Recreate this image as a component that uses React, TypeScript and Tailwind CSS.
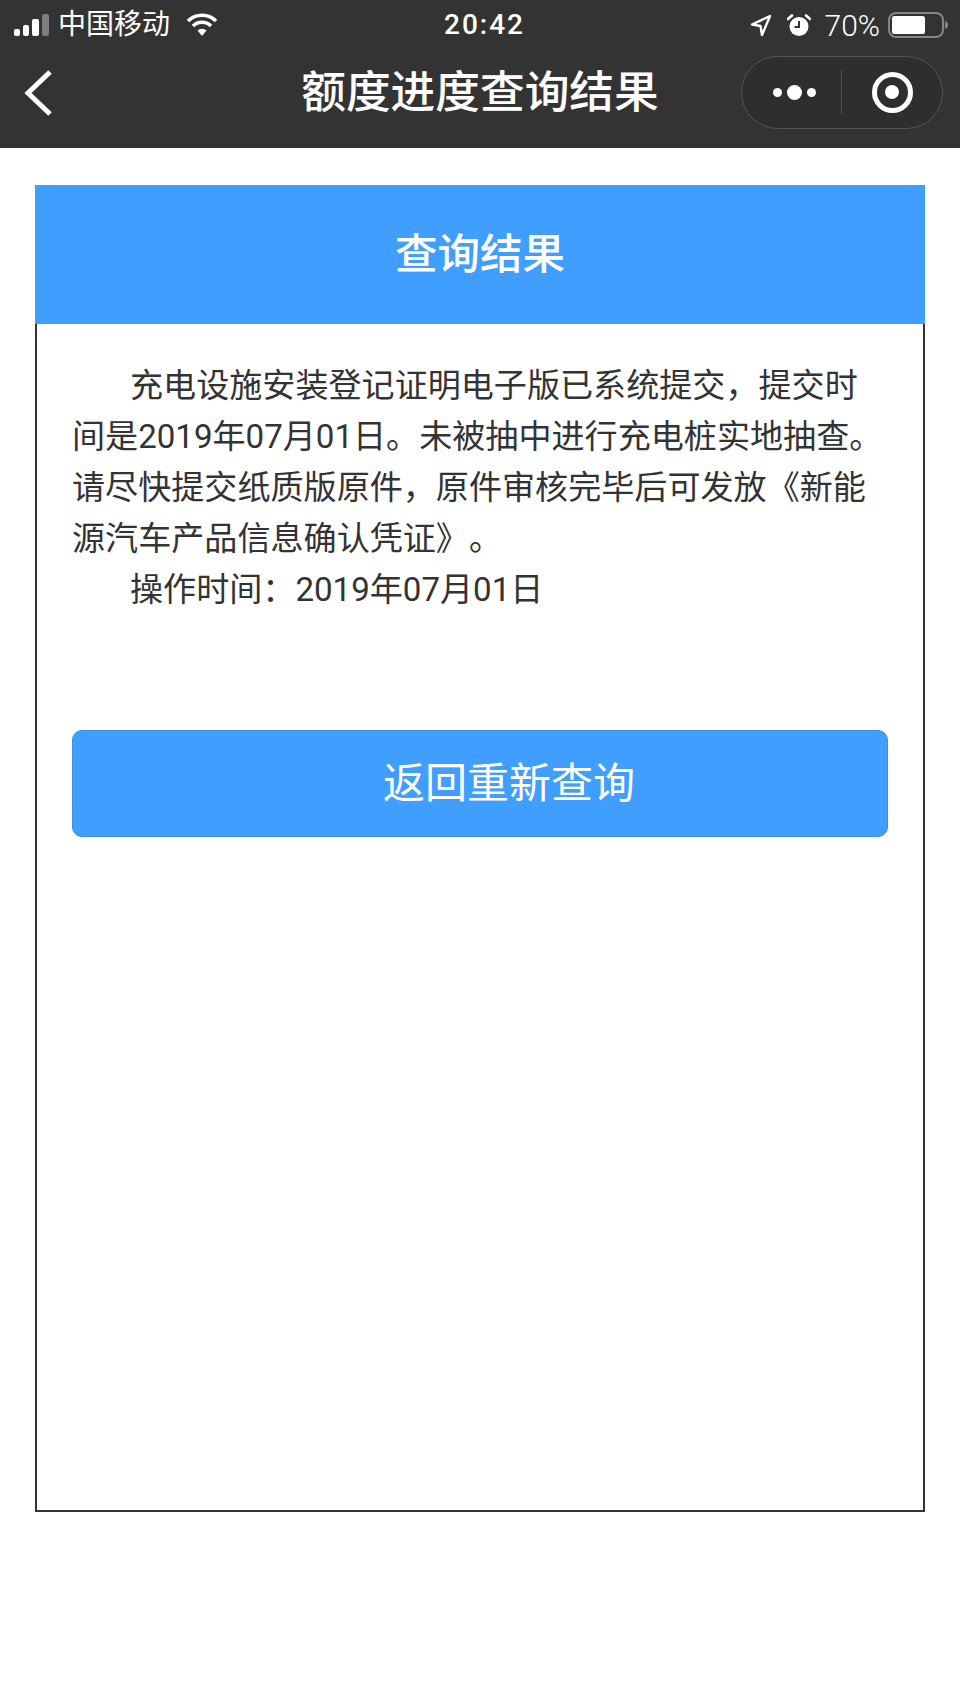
import React from 'react';

function StatusBar() {
  return (
    <div className="h-[50px] grid grid-cols-[1fr_auto_1fr] items-center pl-[14px] pr-[11px] text-white">
      <div className="flex items-center">
        <div className="flex items-end gap-[3px] h-[22px]">
          <span className="w-[6px] h-[7px] bg-white rounded-[2px]" />
          <span className="w-[6px] h-[11px] bg-white rounded-[2px]" />
          <span className="w-[7px] h-[17px] bg-white rounded-[2px]" />
          <span className="w-[7px] h-[22px] bg-[#7d7d7d] rounded-[2px]" />
        </div>
        <span className="ml-[9px] text-[28px]">中国移动</span>
        <svg className="ml-[16px]" width="32" height="24" viewBox="0 0 32 24" fill="none" stroke="white" strokeWidth="3.6">
          <path d="M2 8A20 20 0 0 1 30 8" />
          <path d="M7 13A12.7 12.7 0 0 1 25 13" />
          <path d="M11.5 17.5A6.4 6.4 0 0 1 20.5 17.5L16 23Z" fill="white" stroke="none" />
        </svg>
      </div>
      <span className="ml-[6px] text-[28px] font-medium tracking-[2px]">20:42</span>
      <div className="flex items-center justify-end">
        <svg width="22" height="23" viewBox="0 0 22 23" fill="none" stroke="white" strokeWidth="2.4" strokeLinejoin="round">
          <path d="M2 10.5L20 2L12 21L10.5 12Z" />
        </svg>
        <svg className="ml-[15px]" width="24" height="23" viewBox="0 0 24 23">
          <circle cx="12" cy="12.5" r="9.5" fill="white" />
          <path d="M1 5L5 1.5M23 5L19 1.5" stroke="white" strokeWidth="2.6" strokeLinecap="round" />
          <path d="M12 7V13H7.5" fill="none" stroke="#333333" strokeWidth="2" />
        </svg>
        <span className="ml-[14px] text-[30px] font-light">70%</span>
        <svg className="ml-[8px]" width="61" height="26" viewBox="0 0 61 26">
          <rect x="1" y="1" width="54" height="24" rx="7" fill="none" stroke="#858585" strokeWidth="2" />
          <rect x="4" y="4" width="33" height="18" rx="2.5" fill="white" />
          <path d="M57 9C59 9.500 60 11 60 13C60 15 59 16.500 57 17Z" fill="#858585" />
        </svg>
      </div>
    </div>
  );
}

function NavBar() {
  return (
    <div className="h-[86px] grid grid-cols-[1fr_auto_1fr] items-center text-white">
      <svg className="ml-[23px]" width="30" height="48" viewBox="0 0 30 48" fill="none" stroke="white" strokeWidth="5">
        <path d="M27 3L5 24L27 45" />
      </svg>
      <span className="text-[44.700px] font-medium leading-none">额度进度查询结果</span>
      {/* Capsule */}
      <div className="justify-self-end mr-[17px] -mt-[2px] w-[202px] h-[73px] flex items-center rounded-full border border-[#555555] bg-[#2e2e2e]">
        <div className="w-[99px] shrink-0 pl-[5px] flex items-center justify-center gap-[5px]">
          <span className="w-[9px] h-[9px] rounded-full bg-white" />
          <span className="w-[15px] h-[15px] rounded-full bg-white" />
          <span className="w-[9px] h-[9px] rounded-full bg-white" />
        </div>
        <div className="w-px h-[44px] bg-[#555555]" />
        <div className="flex-1 flex items-center justify-center">
          <div className="w-[41px] h-[41px] rounded-full border-[5px] border-white flex items-center justify-center">
            <span className="w-[14px] h-[14px] rounded-full bg-white" />
          </div>
        </div>
      </div>
    </div>
  );
}

export default function App() {
  return (
    <div lang="zh-CN" className="w-[960px] h-[1706px] bg-white font-['Roboto','Noto_Sans_CJK_SC',sans-serif] [text-spacing-trim:space-all]">
      <div className="h-[148px] bg-[#333333]">
        <StatusBar />
        <NavBar />
      </div>
      <div className="mx-[35px] mt-[37px] h-[1327px] border-2 border-[#333333] border-t-0">
        <div className="-mx-[2px] h-[139px] bg-[#409eff] text-white text-[42.500px] font-medium flex items-center justify-center">查询结果</div>
        <div className="px-[35px] pt-[36px] text-[33.100px] leading-[51px] text-[#333333]">
          <p className="indent-[58px]">充电设施安装登记证明电子版已系统提交，提交时间是2019年07月01日。未被抽中进行充电桩实地抽查。请尽快提交纸质版原件，原件审核完毕后可发放《新能源汽车产品信息确认凭证》。</p>
          <p className="indent-[58px]">操作时间：2019年07月01日</p>
          <button className="mt-[115px] w-full h-[107px] rounded-[10px] border border-[#3a8ee6] bg-[#409eff] text-white text-[42px] indent-[58px]">返回重新查询</button>
        </div>
      </div>
    </div>
  );
}
